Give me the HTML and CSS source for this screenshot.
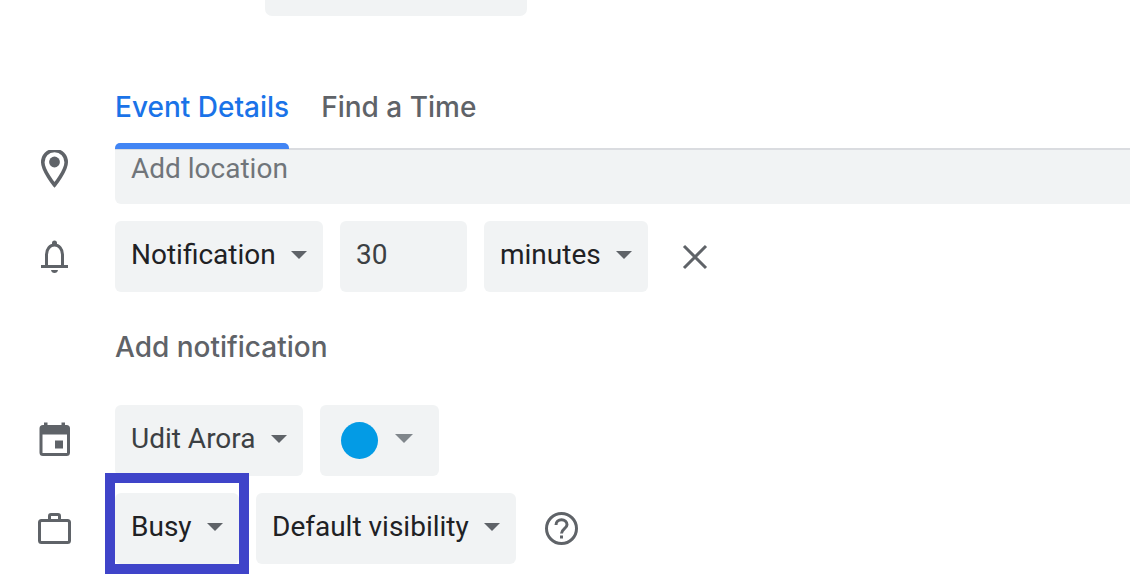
FILE: index.html
```html
<!DOCTYPE html>
<html lang="en">
<head>
    <meta charset="utf-8">
    <title>Event Details</title>
    <link rel="stylesheet" href="styles.css">
</head>
<body>
    <header class="event-header">
        <div class="header-field"></div>
        <nav class="tabs">
            <a href="#details" class="tab active">Event Details</a>
            <a href="#find-time" class="tab">Find a Time</a>
        </nav>
    </header>

    <form id="details" class="event-form">
        <div class="form-row">
            <svg class="icon" viewBox="0 0 42 42" aria-hidden="true">
                <path d="M21.500 2.500C14.500 2.500 9.800 7.700 9.800 14.200C9.800 22.500 21.500 37 21.500 37S33.200 22.500 33.200 14.200C33.200 7.700 28.500 2.500 21.500 2.500Z" fill="none" stroke="currentColor" stroke-width="3.600"/>
                <circle cx="21.500" cy="14" r="5.400" fill="currentColor"/>
            </svg>
            <input type="text" class="field location" aria-label="Location" placeholder="Add location">
        </div>

        <div class="form-row">
            <svg class="icon" viewBox="0 0 42 42" aria-hidden="true">
                <path d="M8 30.500H35M13.500 30V18.500C13.500 13 17 9 21.500 9S29.500 13 29.500 18.500V30" fill="none" stroke="currentColor" stroke-width="3"/>
                <path d="M19 9V7Q19 4.500 21.500 4.500T24 7V9ZM18 34H25Q24.500 37 21.500 37T18 34Z" fill="currentColor"/>
            </svg>
            <span class="select">
                <select class="field" aria-label="Notification type">
                    <option>Notification</option>
                </select>
            </span>
            <input type="text" class="field amount" aria-label="Time before event" value="30">
            <span class="select">
                <select class="field" aria-label="Time unit">
                    <option>minutes</option>
                </select>
            </span>
            <button type="button" class="icon-button" aria-label="Remove notification">
                <svg class="icon" viewBox="0 0 42 42" aria-hidden="true">
                    <path d="M11 10L33 32M33 10L11 32" fill="none" stroke="currentColor" stroke-width="3"/>
                </svg>
            </button>
        </div>

        <div class="form-row add-row">
            <button type="button" class="add-button">Add notification</button>
        </div>

        <div class="form-row">
            <svg class="icon" viewBox="0 0 42 42" aria-hidden="true">
                <path fill-rule="evenodd" fill="currentColor" d="M11 2.500H14.500V5H28.500V2.500H32V5H33.500Q37 5 37 8.500V32.500Q37 36 33.500 36H10Q6.500 36 6.500 32.500V8.500Q6.500 5 10 5H11ZM9.500 14.500V33H34V14.500ZM22 20.500H30V28.500H22Z"/>
            </svg>
            <span class="select">
                <select class="field calendar" aria-label="Calendar">
                    <option>Udit Arora</option>
                </select>
            </span>
            <button type="button" class="field color-button" aria-label="Event color">
                <span class="swatch"></span>
                <span class="arrow"></span>
            </button>
        </div>

        <div class="form-row">
            <svg class="icon" viewBox="0 0 42 42" aria-hidden="true">
                <rect x="6.500" y="12.500" width="30" height="22" rx="2" fill="none" stroke="currentColor" stroke-width="3"/>
                <path d="M16.500 12V8Q16.500 6.500 18 6.500H25Q26.500 6.500 26.500 8V12" fill="none" stroke="currentColor" stroke-width="3"/>
            </svg>
            <span class="select highlight">
                <select class="field" aria-label="Availability">
                    <option>Busy</option>
                </select>
            </span>
            <span class="select">
                <select class="field" aria-label="Visibility">
                    <option>Default visibility</option>
                </select>
            </span>
            <button type="button" class="icon-button" aria-label="Help">
                <svg class="icon" viewBox="0 0 42 42" aria-hidden="true">
                    <circle cx="20.500" cy="20.500" r="15" fill="none" stroke="currentColor" stroke-width="3"/>
                    <path d="M15 17C15 13.500 17.500 11.800 20.500 11.800S26 13.800 26 16.800C26 20.500 20.500 21 20.500 25.500" fill="none" stroke="currentColor" stroke-width="3"/>
                    <path d="M19 27.500H22V30.500H19Z" fill="currentColor"/>
                </svg>
            </button>
        </div>
    </form>
</body>
</html>
```
FILE: styles.css
```css
body {
    margin: 0;
    background-color: #fff;
    color: #5f6368;
    font-family: Roboto, sans-serif;
}

.event-header {
    position: relative;
    z-index: 1;
    background-color: #fff;
    padding-left: 115px;
}

.header-field {
    width: 262px;
    height: 16px;
    margin-left: 150px;
    background-color: #f1f3f4;
    border-radius: 0 0 7px 7px;
}

.tabs {
    display: flex;
    gap: 32px;
    margin-top: 50px;
    border-bottom: 2px solid #dadce0;
}

.tab {
    height: 83px;
    margin-bottom: -1px;
    color: #5f6368;
    font-family: Inter, sans-serif;
    font-size: 28px;
    font-weight: 500;
    line-height: 82px;
    text-decoration: none;
}

.tab.active {
    position: relative;
    color: #1a73e8;
}

.tab.active::after {
    content: "";
    position: absolute;
    left: 0;
    right: 0;
    bottom: 0;
    height: 6px;
    background-color: #4285f4;
    border-radius: 5px 5px 0 0;
}

/* the first row is scrolled partly under the header */
.event-form {
    display: flex;
    flex-direction: column;
    gap: 17px;
    margin-top: -17px;
    padding-bottom: 22px;
}

.form-row {
    display: flex;
    align-items: center;
    gap: 17px;
    padding-left: 33px;
}

.icon {
    width: 42px;
    height: 42px;
    flex: none;
    display: block;
}

.form-row > .icon {
    margin-right: 23px;
}

.field {
    height: 71px;
    box-sizing: border-box;
    padding: 0 16px 4px;
    border: none;
    border-radius: 6px;
    background-color: #f1f3f4;
    color: #3c4043;
    font-family: Roboto, sans-serif;
    font-size: 28px;
}

.location {
    flex: 1;
    min-width: 0;
    padding-bottom: 0;
    border-radius: 6px 0 0 6px;
}

.location::placeholder {
    color: #70757a;
    opacity: 1;
}

.amount {
    width: 127px;
}

.select {
    position: relative;
    display: flex;
}

.select .field {
    appearance: none;
    padding-right: 47px;
    color: #202124;
}

.select .calendar {
    color: #3c4043;
}

.select::before {
    content: "";
    position: absolute;
    right: 16px;
    top: 30px;
    border: 8px solid transparent;
    border-top-color: #5f6368;
    border-bottom: none;
    pointer-events: none;
}

.highlight::after {
    content: "";
    position: absolute;
    inset: -20px -10px -10px;
    border: 10px solid #3f44c9;
    pointer-events: none;
}

.icon-button {
    padding: 0;
    margin-left: 8px;
    border: none;
    background: none;
    color: #5f6368;
}

.add-row {
    height: 79px;
    padding-left: 115px;
}

.add-button {
    padding: 0 0 3px;
    border: none;
    background: none;
    color: #5f6368;
    font-family: Inter, sans-serif;
    font-size: 28px;
    font-weight: 500;
}

.color-button {
    display: flex;
    align-items: center;
    gap: 17px;
    padding: 0 26px 0 21px;
}

.swatch {
    width: 37px;
    height: 37px;
    border-radius: 50%;
    background-color: #039be5;
}

.arrow {
    margin-bottom: 4px;
    border: 9px solid transparent;
    border-top-color: #80868b;
    border-bottom: none;
}
```
